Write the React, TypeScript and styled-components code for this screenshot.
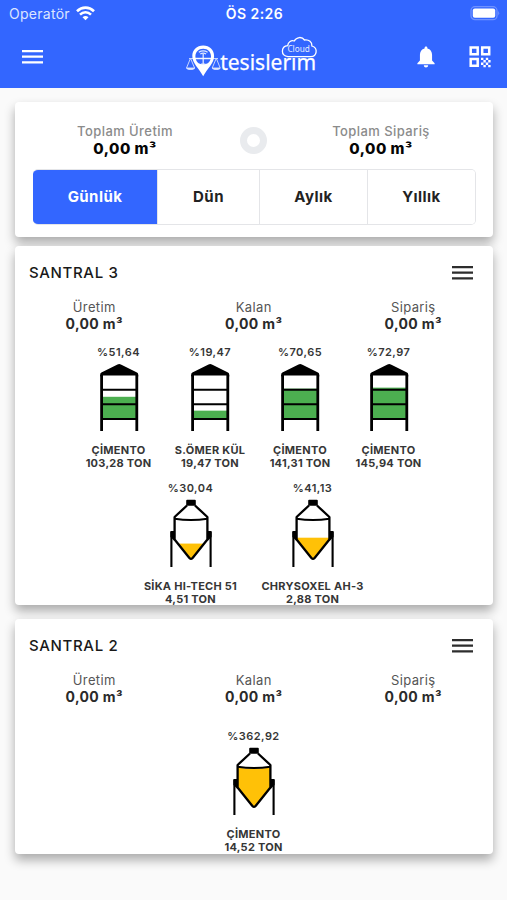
import React from "react";
import styled, { createGlobalStyle } from "styled-components";

const Global = createGlobalStyle`
  * { box-sizing: border-box; }
  body { margin: 0; background: #fafafa; font-family: Inter, "Liberation Sans", sans-serif; }
  svg { display: block; flex: none; }
`;

const Screen = styled.div`
  width: 507px;
  height: 900px;
  overflow: hidden;
  background: #fafafa;
`;

const Header = styled.header`
  height: 88px;
  background: #3366ff;
  color: #fff;
`;

const StatusBar = styled.div`
  display: grid;
  grid-template-columns: 1fr auto 1fr;
  align-items: center;
  height: 27px;
  padding: 0 7px 0 9px;
`;

const Carrier = styled.div`
  display: flex;
  align-items: center;
  gap: 6px;
  font-size: 14px;
  letter-spacing: 0.28px;
  color: #dce5ff;
`;

const Clock = styled.div`
  font-size: 14px;
  font-weight: 600;
  letter-spacing: 0.45px;
`;

const BatterySlot = styled.div`
  display: flex;
  justify-content: flex-end;
`;

const NavBar = styled.div`
  display: flex;
  align-items: center;
  height: 60px;
  padding: 0 16px 0 22px;
`;

const Brand = styled.div`
  margin-left: 142px;
`;

const Actions = styled.div`
  display: flex;
  align-items: center;
  gap: 34px;
  margin-left: auto;
`;

const Content = styled.main`
  display: flex;
  flex-direction: column;
  padding: 14px 14px 0 15px;
`;

const Card = styled.section<{ $height: number; $gap: number }>`
  height: ${(p) => p.$height}px;
  margin-bottom: ${(p) => p.$gap}px;
  background: #fff;
  border-radius: 4px;
  box-shadow: 0 6px 11px rgba(0, 0, 0, 0.32);
`;

const Totals = styled.div`
  display: grid;
  grid-template-columns: 220px 36px 220px;
  align-items: center;
  padding-top: 21px;
`;

const Stat = styled.div`
  display: flex;
  flex-direction: column;
  align-items: center;
  white-space: nowrap;
`;

const TotalLabel = styled.div`
  font-size: 13px;
  line-height: 17px;
  font-weight: 500;
  letter-spacing: 0.42px;
  color: #8b8b8b;
`;

const TotalValue = styled.div`
  font-size: 15px;
  line-height: 17px;
  font-weight: 800;
  letter-spacing: 0.5px;
  color: #050505;
`;

const Ring = styled.div`
  width: 27px;
  height: 27px;
  margin: 1px auto 0;
  border: 7px solid #e9ebee;
  border-radius: 50%;
`;

const Tabs = styled.div`
  display: grid;
  grid-template-columns: 124px 102px 108px 108px;
  width: 443px;
  height: 56px;
  margin: 12px 0 0 18px;
  border: 1px solid #e4e5e8;
  border-left: 0;
  border-radius: 5px;
  overflow: hidden;
`;

const Tab = styled.button<{ $active?: boolean }>`
  padding: 0 0 1px;
  border: 0;
  border-left: ${(p) => (p.$active ? "0" : "1px solid #e4e5e8")};
  background: ${(p) => (p.$active ? "#3366ff" : "#fff")};
  color: ${(p) => (p.$active ? "#fff" : "#222")};
  font: 700 15px Inter, sans-serif;
  letter-spacing: 0.45px;
`;

const CardHead = styled.div`
  display: flex;
  align-items: center;
  justify-content: space-between;
  height: 53px;
  padding: 0 20px 0 14px;
`;

const CardTitle = styled.h2`
  margin: 0;
  font-size: 15px;
  font-weight: 500;
  letter-spacing: 0.65px;
  color: #191919;
`;

const StatRow = styled.div`
  display: grid;
  grid-template-columns: repeat(3, 159.5px);
  margin-left: -0.5px;
`;

const StatLabel = styled.div`
  font-size: 13px;
  line-height: 17px;
  letter-spacing: 0.35px;
  color: #555;
`;

const StatValue = styled.div`
  font-size: 14px;
  line-height: 16px;
  font-weight: 700;
  letter-spacing: 0.35px;
  color: #2a2a2a;
`;

const SiloRow = styled.div<{ $top: number }>`
  display: flex;
  justify-content: center;
  gap: 23px;
  margin: ${(p) => p.$top}px 1px 0 0;
`;

const SiloItem = styled.div<{ $width: number }>`
  display: flex;
  flex-direction: column;
  align-items: center;
  width: ${(p) => p.$width}px;
  font-size: 11px;
  line-height: 13.4px;
  font-weight: 700;
  letter-spacing: 0.25px;
  white-space: nowrap;
  color: #363636;
`;

const Percent = styled.div`
  height: 18px;
  line-height: 14px;
  font-weight: 600;
  letter-spacing: 0.45px;
`;

const SiloText = styled.div`
  height: 26px;
  margin: 12.6px 0 0;
  text-align: center;
`;

const MenuIcon = ({ color }: { color: string }) => (
  <svg width="21" height="16" viewBox="0 0 21 16" stroke={color} strokeWidth="2.3">
    <path d="M0 2.1H21M0 7.7H21M0 13.3H21" />
  </svg>
);

const WifiIcon = () => (
  <svg width="19" height="15" viewBox="0 0 19 15" fill="none" stroke="#fff" strokeWidth="2.6">
    <path d="M1 5.3C6 0.4 13 0.4 18 5.3" />
    <path d="M4 8.6C7.2 5.5 11.8 5.5 15 8.6" />
    <path d="M6.5 11.3Q9.5 8.6 12.5 11.3L9.5 14.3Z" fill="#fff" stroke="none" />
  </svg>
);

const BatteryIcon = () => (
  <svg width="30" height="15" viewBox="0 0 30 15">
    <rect x="1" y="0.7" width="26" height="13" rx="4" fill="none" stroke="#6f92ff" strokeWidth="1.3" />
    <rect x="2.8" y="2.6" width="22.4" height="9.2" rx="2" fill="#fff" />
    <path d="M28.2 5Q30.2 7.2 28.2 9.4Z" fill="#6f92ff" />
  </svg>
);

const Logo = () => (
  <svg width="134" height="44" viewBox="0 0 134 44" fill="none" stroke="#fff">
    <path d="M4 23.5H33M5.2 24L1.5 33H9.6L5.8 24M31 24L27.2 33H35.2L31.6 24" strokeWidth="0.9" opacity="0.8" />
    <path d="M1.2 33H10Q9.4 35 5.6 35T1.2 33ZM27 33H35.5Q35 35 31.3 35T27 33Z" fill="#fff" stroke="none" opacity="0.75" />
    <path
      d="M18.2 10.5C11.8 10.5 7.3 15 7.3 20.9C7.3 28.2 14 33.4 18.2 41.2C22.4 33.4 29.1 28.2 29.1 20.9C29.1 15 24.6 10.5 18.2 10.5ZM18.2 13.7C23 13.7 26 17 26 21.4S23 29.4 18.2 29.4S10.4 25.8 10.4 21.4S13.4 13.7 18.2 13.7Z"
      fill="#fff"
      fillRule="evenodd"
      stroke="none"
    />
    <path d="M10 23.5H26M18.2 19V30M13.8 17.2Q18.2 14.6 22.6 17.2M15.3 19Q18.2 17.3 21.1 19M16 29.1H20.4" strokeWidth="1.3" opacity="0.85" />
    <text x="35.2" y="34.7" textLength="96" lengthAdjust="spacingAndGlyphs" fontFamily="Noto Sans, sans-serif" fontSize="22" fill="#fff" stroke="#fff" strokeWidth="0.25">tesislerim</text>
    <path
      d="M103 21.6C99.5 21.1 97.4 19 97.4 16.2C97.4 13 99.6 10.9 102.7 10.6C103 6.8 106.5 5 109.2 6C111.5 1.9 116.8 1.2 119.5 5C124 4.3 127.2 7 126.9 11C130 12 131.5 14.4 131.1 17.2C130.7 20 128.5 21.7 125.8 21.7Z"
      fill="#3366ff"
      strokeWidth="1.3"
    />
    <text x="102.4" y="17.3" textLength="22.4" lengthAdjust="spacingAndGlyphs" fontFamily="Noto Sans, sans-serif" fontSize="9" fill="#e5ecff" stroke="none">Cloud</text>
  </svg>
);

const BellIcon = () => (
  <svg width="18" height="22" viewBox="0 0 19 23" fill="#fff">
    <path d="M9.5 0.5C10.5 0.5 11 1.2 11 2.4C14.2 3.1 15.9 5.8 15.9 9.2V15.3L18.6 18V19.2H0.4V18L3.1 15.3V9.2C3.1 5.8 4.8 3.1 8 2.4C8 1.2 8.5 0.5 9.5 0.5ZM7.2 20.2H11.8C11.7 21.7 10.8 22.6 9.5 22.6S7.3 21.7 7.2 20.2Z" />
  </svg>
);

const QrIcon = () => (
  <svg width="22" height="22" viewBox="0 0 22 22" fill="none" stroke="#fff" strokeWidth="2.5">
    <path d="M1.7 1.4H8.7V8.2H1.7ZM13.2 1.4H20.2V8.2H13.2ZM1.7 12.9H8.7V19.7H1.7Z" />
    <path
      d="M12 11.7h2.4v2.4H12zM16.8 11.7h2.4v2.4h-2.4zM14.4 14.1h2.4v2.4h-2.4zM19.2 14.1h2.4v2.4h-2.4zM12 16.5h2.4v2.4H12zM16.8 16.5h2.4v2.4h-2.4zM14.4 18.9h2.4v2.4h-2.4zM19.2 18.9h2.4v2.4h-2.4z"
      fill="#fff"
      stroke="none"
    />
  </svg>
);

const FlatSilo = ({ level }: { level: number }) => {
  const filled = (43 * Math.min(level, 100)) / 100;
  return (
    <svg width="40" height="68" viewBox="0 0 40 68">
      <rect x="2.5" y={56 - filled} width="35" height={filled} fill="#4caf50" />
      <path d="M2.6 68V12M37.8 68V12" stroke="#000" strokeWidth="2.8" />
      <path d="M2 26.7H38M2 41.2H38M2 56H38" stroke="#000" strokeWidth="1.9" />
      <path d="M1.2 13.5V11.3Q1.2 10.2 2.4 9.6L18.5 1.4Q20.2 0.6 21.9 1.4L38 9.6Q39.2 10.2 39.2 11.3V13.5L37 12.6H3.4Z" fill="#000" />
    </svg>
  );
};

const ConeSilo = ({ id, level }: { id: string; level: number }) => {
  const top = Math.max(20, 60.5 - (53 * level) / 100);
  return (
    <svg width="44" height="68" viewBox="0 0 44 68" fill="none" stroke="#000">
      <clipPath id={id}>
        <path d="M5.5 20.5Q22 23 38.5 20.5V40.5L22 60L5.5 40.5Z" />
      </clipPath>
      <rect x="5" y={top} width="34" height={61 - top} fill="#ffc107" stroke="none" clipPath={`url(#${id})`} />
      <path d="M18 6.5L5.6 18V40.5L20.4 59Q22 60.6 23.6 59L38.4 40.5V18L26 6.5" strokeWidth="2.3" strokeLinejoin="round" />
      <path d="M5.6 19.8Q22 22.4 38.4 19.8" strokeWidth="2" />
      <path d="M17.2 1.8Q17.2 0.8 18.2 0.8H25.8Q26.8 0.8 26.8 1.8V6.8H17.2Z" fill="#000" stroke="none" />
      <path d="M2.4 68V33M41.6 68V33" strokeWidth="2.1" />
      <path d="M1.4 32H5.5V42L1.4 38ZM42.6 32H38.5V42L42.6 38Z" fill="#000" stroke="none" />
    </svg>
  );
};

type Silo = { id: string; kind: "flat" | "cone"; level: number; percent: string; name: string; weight: string; width: number };

const Silos = ({ items, top }: { items: Silo[]; top: number }) => (
  <SiloRow $top={top}>
    {items.map((s) => (
      <SiloItem key={s.id} $width={s.width}>
        <Percent>{s.percent}</Percent>
        {s.kind === "flat" ? <FlatSilo level={s.level} /> : <ConeSilo id={s.id} level={s.level} />}
        <SiloText>
          <div>{s.name}</div>
          <div>{s.weight}</div>
        </SiloText>
      </SiloItem>
    ))}
  </SiloRow>
);

const PlantSummary = ({ title }: { title: string }) => (
  <>
    <CardHead>
      <CardTitle>{title}</CardTitle>
      <MenuIcon color="#2d2d2d" />
    </CardHead>
    <StatRow>
      {["Üretim", "Kalan", "Sipariş"].map((label) => (
        <Stat key={label}>
          <StatLabel>{label}</StatLabel>
          <StatValue>0,00 m³</StatValue>
        </Stat>
      ))}
    </StatRow>
  </>
);

const cementSilos: Silo[] = [
  { id: "s1", kind: "flat", level: 51.64, percent: "%51,64", name: "ÇİMENTO", weight: "103,28 TON", width: 67 },
  { id: "s2", kind: "flat", level: 19.47, percent: "%19,47", name: "S.ÖMER KÜL", weight: "19,47 TON", width: 70 },
  { id: "s3", kind: "flat", level: 70.65, percent: "%70,65", name: "ÇİMENTO", weight: "141,31 TON", width: 64 },
  { id: "s4", kind: "flat", level: 72.97, percent: "%72,97", name: "ÇİMENTO", weight: "145,94 TON", width: 67 },
];

const additiveSilos: Silo[] = [
  { id: "a1", kind: "cone", level: 30.04, percent: "%30,04", name: "SİKA HI-TECH 51", weight: "4,51 TON", width: 95 },
  { id: "a2", kind: "cone", level: 41.13, percent: "%41,13", name: "CHRYSOXEL AH-3", weight: "2,88 TON", width: 103 },
];

const secondPlantSilos: Silo[] = [
  { id: "b1", kind: "cone", level: 362.92, percent: "%362,92", name: "ÇİMENTO", weight: "14,52 TON", width: 60 },
];

export default function App() {
  return (
    <Screen>
      <Global />
      <Header>
        <StatusBar>
          <Carrier>
            Operatör
            <WifiIcon />
          </Carrier>
          <Clock>ÖS 2:26</Clock>
          <BatterySlot>
            <BatteryIcon />
          </BatterySlot>
        </StatusBar>
        <NavBar>
          <MenuIcon color="#fff" />
          <Brand>
            <Logo />
          </Brand>
          <Actions>
            <BellIcon />
            <QrIcon />
          </Actions>
        </NavBar>
      </Header>
      <Content>
        <Card $height={135} $gap={9}>
          <Totals>
            <Stat>
              <TotalLabel>Toplam Üretim</TotalLabel>
              <TotalValue>0,00 m³</TotalValue>
            </Stat>
            <Ring />
            <Stat>
              <TotalLabel>Toplam Sipariş</TotalLabel>
              <TotalValue>0,00 m³</TotalValue>
            </Stat>
          </Totals>
          <Tabs>
            <Tab $active>Günlük</Tab>
            <Tab>Dün</Tab>
            <Tab>Aylık</Tab>
            <Tab>Yıllık</Tab>
          </Tabs>
        </Card>
        <Card $height={359} $gap={14}>
          <PlantSummary title="SANTRAL 3" />
          <Silos items={cementSilos} top={13} />
          <Silos items={additiveSilos} top={11.4} />
        </Card>
        <Card $height={235} $gap={0}>
          <PlantSummary title="SANTRAL 2" />
          <Silos items={secondPlantSilos} top={24} />
        </Card>
      </Content>
    </Screen>
  );
}
